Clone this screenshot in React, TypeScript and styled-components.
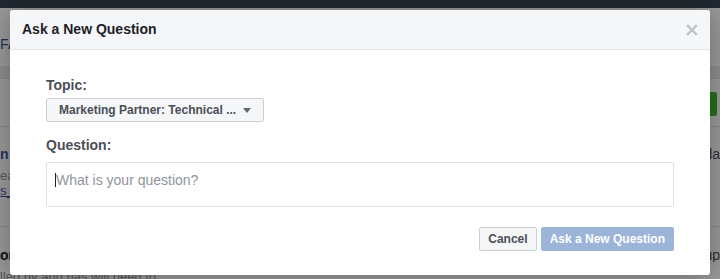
import React from 'react';
import styled, { createGlobalStyle } from 'styled-components';

const GlobalStyle = createGlobalStyle`
  html, body {
    margin: 0;
    padding: 0;
    background: #ffffff;
    font-family: "Liberation Sans", Arial, sans-serif;
  }
  #root {
    width: 720px;
    height: 279px;
    position: relative;
    overflow: hidden;
  }
`;

// page behind the dialog, only its edges show
const Page = styled.div`
  width: 720px;
  height: 279px;
  display: flex;
  flex-direction: column;
  background: #ffffff;
`;

const TopBar = styled.div`
  height: 8px;
  flex-shrink: 0;
  background: #3a4350;
`;

const Band = styled.div<{ $h: number; $top?: number; $bg?: string; $border?: boolean; $size?: number }>`
  height: ${(p) => p.$h}px;
  flex-shrink: 0;
  margin-top: ${(p) => p.$top || 0}px;
  background: ${(p) => p.$bg || 'transparent'};
  border-bottom: ${(p) => (p.$border ? '1px solid #dddfe2' : 'none')};
  display: flex;
  justify-content: space-between;
  align-items: center;
  font-size: ${(p) => p.$size || 14}px;
  line-height: ${(p) => p.$h}px;
  overflow: hidden;
`;

const Frag = styled.span<{ $color?: string; $bold?: boolean; $underline?: boolean }>`
  color: ${(p) => p.$color || '#4b4f56'};
  font-weight: ${(p) => (p.$bold ? 700 : 400)};
  text-decoration: ${(p) => (p.$underline ? 'underline' : 'none')};
  white-space: nowrap;
`;

const GreenBtn = styled.span`
  width: 14px;
  height: 24px;
  margin-left: auto;
  margin-right: 3px;
  background: #42b72a;
  border-radius: 2px;
`;

const Overlay = styled.div`
  position: absolute;
  inset: 0;
  background: rgba(0, 0, 0, 0.4);
`;

const Dialog = styled.div`
  position: absolute;
  left: 10px;
  top: 10px;
  width: 700px;
  background: #ffffff;
  border-radius: 3px;
  box-shadow: 0 2px 26px rgba(0, 0, 0, 0.3);
  overflow: hidden;
`;

const Header = styled.div`
  height: 39px;
  background: #f5f6f7;
  border-bottom: 1px solid #e5e5e5;
  display: flex;
  align-items: center;
  justify-content: space-between;
  padding: 0 12px;
`;

const Title = styled.h3`
  margin: 0;
  font-size: 14px;
  font-weight: 700;
  color: #1d2129;
  line-height: 19px;
`;

const Close = styled.button`
  border: 0;
  background: none;
  padding: 0;
  width: 12px;
  height: 12px;
  display: flex;
  cursor: pointer;
`;

const Body = styled.div`
  padding: 26px 36px 24px 36px;
  display: flex;
  flex-direction: column;
`;

const Label = styled.label<{ $top?: number }>`
  display: block;
  font-size: 14px;
  font-weight: 700;
  color: #4b4f56;
  line-height: 18px;
  margin-top: ${(p) => p.$top || 0}px;
`;

const SelectBtn = styled.button`
  margin-top: 4px;
  width: 218px;
  height: 24px;
  display: flex;
  align-items: center;
  justify-content: space-between;
  padding: 0 12px 0 12px;
  background: #f5f6f7;
  border: 1px solid #ccd0d5;
  border-radius: 2px;
  font-family: inherit;
  font-size: 12px;
  font-weight: 700;
  color: #4b4f56;
  box-sizing: border-box;
`;

const Caret = styled.span`
  width: 0;
  height: 0;
  margin-top: 1px;
  border-left: 4px solid transparent;
  border-right: 4px solid transparent;
  border-top: 5px solid #606770;
`;

const QuestionBox = styled.div`
  margin-top: 8px;
  width: 628px;
  height: 45px;
  box-sizing: border-box;
  border: 1px solid #dddfe2;
  border-radius: 2px;
  padding: 7px 8px;
  display: flex;
  align-items: flex-start;
`;

const CursorMark = styled.span`
  width: 1px;
  height: 14px;
  margin-top: 3px;
  background: #1d2129;
`;

const Placeholder = styled.span`
  font-size: 14px;
  line-height: 20px;
  color: #90949c;
`;

const Footer = styled.div`
  margin-top: 20px;
  width: 628px;
  display: flex;
  justify-content: flex-end;
  gap: 4px;
`;

const Btn = styled.button<{ $primary?: boolean }>`
  height: 24px;
  padding: 0 8px;
  box-sizing: border-box;
  border-radius: 2px;
  font-family: inherit;
  font-size: 12px;
  font-weight: 700;
  border: 1px solid ${(p) => (p.$primary ? '#9cb4d8' : '#ccd0d5')};
  background: ${(p) => (p.$primary ? '#9cb4d8' : '#f5f6f7')};
  color: ${(p) => (p.$primary ? '#ffffff' : '#4b4f56')};
`;

export default function App() {
  return (
    <>
      <GlobalStyle />
      <Page>
        <TopBar />
        <Band $h={24} $top={24}>
          <Frag $color="#365899">FAQ</Frag>
        </Band>
        <Band $h={12} $top={10} $bg="#e9ebee" $border />
        <Band $h={24} $top={13}>
          <GreenBtn />
        </Band>
        <Band $h={10} $border />
        <Band $h={14} $top={20}>
          <Frag $color="#365899" $bold>n</Frag>
          <Frag>da</Frag>
        </Band>
        <Band $h={14} $top={8} $size={13}>
          <Frag $color="#90949c">ea</Frag>
        </Band>
        <Band $h={14} $top={1} $size={13}>
          <Frag $color="#365899" $underline>s_</Frag>
        </Band>
        <Band $h={28} $border />
        <Band $h={14} $top={21}>
          <Frag $color="#1d2129" $bold>or</Frag>
          <Frag>up</Frag>
        </Band>
        <Band $h={14} $top={8} $size={13}>
          <Frag $color="#90949c">lled by and has will need to</Frag>
        </Band>
      </Page>
      <Overlay />
      <Dialog role="dialog">
        <Header>
          <Title>Ask a New Question</Title>
          <Close aria-label="Close">
            <svg width="12" height="12" viewBox="0 0 12 12">
              <path d="M2 2 L10 10 M10 2 L2 10" stroke="#bec2c9" strokeWidth="2.4" strokeLinecap="square" />
            </svg>
          </Close>
        </Header>
        <Body>
          <Label>Topic:</Label>
          <SelectBtn>
            <span>Marketing Partner: Technical ...</span>
            <Caret />
          </SelectBtn>
          <Label $top={14}>Question:</Label>
          <QuestionBox>
            <CursorMark />
            <Placeholder>What is your question?</Placeholder>
          </QuestionBox>
          <Footer>
            <Btn>Cancel</Btn>
            <Btn $primary>Ask a New Question</Btn>
          </Footer>
        </Body>
      </Dialog>
    </>
  );
}
